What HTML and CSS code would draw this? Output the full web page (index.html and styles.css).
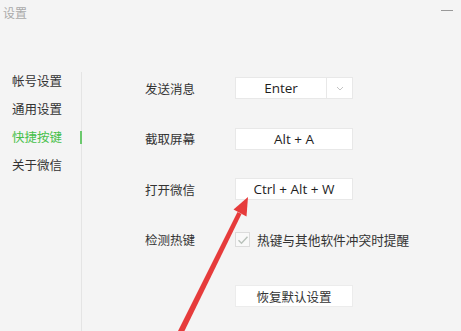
FILE: index.html
```html
<!DOCTYPE html>
<html>
<head>
    <title>设置</title>
    <link rel="stylesheet" href="styles.css">
</head>
<body>
    <div class="titlebar">
        <span class="title">设置</span>
        <span class="min"></span>
    </div>

    <div class="main">
        <ul class="nav">
            <li>帐号设置</li>
            <li>通用设置</li>
            <li class="active">快捷按键</li>
            <li>关于微信</li>
        </ul>
        <div class="divider"></div>

        <div class="content">
            <div class="row">
                <span class="label">发送消息</span>
                <div class="key select">
                    <span class="value">Enter</span>
                    <span class="drop">
                        <svg width="8" height="5" viewBox="0 0 8 5"><path d="M1 1l3 3 3-3" fill="none" stroke="#c4c4c4" stroke-width="1"/></svg>
                    </span>
                </div>
            </div>
            <div class="row">
                <span class="label">截取屏幕</span>
                <div class="key">Alt + A</div>
            </div>
            <div class="row">
                <span class="label">打开微信</span>
                <div class="key">Ctrl + Alt + W</div>
            </div>
            <div class="row">
                <span class="label">检测热键</span>
                <span class="check">
                    <svg width="12" height="10" viewBox="0 0 12 10"><path d="M1.5 5.2l3 3 6-6.5" fill="none" stroke="#b9c2bb" stroke-width="1.4"/></svg>
                </span>
                <span class="check-text">热键与其他软件冲突时提醒</span>
            </div>
            <div class="row last">
                <span class="label"></span>
                <button class="reset">恢复默认设置</button>
            </div>
        </div>
    </div>

    <svg class="arrow" width="461" height="331" viewBox="0 0 461 331">
        <polygon points="177,333 183,334 241.5,214 237.5,212" fill="#e63b3b"/>
        <polygon points="248,197 246.5,216.5 233.5,209.5" fill="#e63b3b"/>
    </svg>
</body>
</html>
```

FILE: styles.css
```css
body {
    margin: 0;
    background-color: #f4f4f4;
    font-family: "Noto Sans CJK SC", "Noto Sans", sans-serif;
    color: #333;
    width: 461px;
    height: 331px;
    overflow: hidden;
}

.titlebar {
    height: 26px;
    display: flex;
    justify-content: space-between;
    align-items: flex-start;
}

.title {
    font-size: 12px;
    color: #aaa;
    margin: 5px 0 0 3px;
    line-height: 16px;
}

.min {
    width: 12px;
    height: 1px;
    background-color: #999;
    margin: 10px 8px 0 0;
}

.main {
    display: flex;
    margin-top: 40px;
    height: 265px;
}

.nav {
    list-style: none;
    margin: 0;
    padding: 1px 0 0 12px;
    width: 69px;
}

.nav li {
    font-size: 12.5px;
    line-height: 28px;
    height: 28px;
    position: relative;
    white-space: nowrap;
}

.nav li.active {
    color: #46c04a;
}

.nav li.active::after {
    content: "";
    position: absolute;
    right: -1px;
    top: 8px;
    width: 2px;
    height: 13px;
    background-color: #6bc96d;
}

.divider {
    width: 1px;
    background-color: #e4e4e4;
    margin-top: 6px;
}

.content {
    padding: 11px 0 0 63px;
    display: flex;
    flex-direction: column;
    gap: 28.5px;
}

.row {
    display: flex;
    align-items: center;
    height: 22px;
}

.row.last {
    margin-top: 6px;
}

.label {
    width: 90px;
    font-size: 12.5px;
    color: #333;
}

.key {
    width: 116px;
    height: 20px;
    background-color: #fff;
    border: 1px solid #e8e8e8;
    display: flex;
    align-items: center;
    justify-content: center;
    font-family: "Open Sans", sans-serif;
    font-size: 13.5px;
    color: #1e1e1e;
}

.key.select {
    justify-content: flex-start;
}

.value {
    flex: 1;
    text-align: center;
}

.drop {
    width: 25px;
    height: 100%;
    border-left: 1px solid #e8e8e8;
    display: flex;
    align-items: center;
    justify-content: center;
}

.check {
    width: 13px;
    height: 13px;
    border: 1px solid #dcdcdc;
    background-color: #f9f9f9;
    display: flex;
    align-items: center;
    justify-content: center;
    margin-right: 7px;
}

.check-text {
    font-size: 12.7px;
    color: #333;
}

.reset {
    width: 118px;
    height: 22px;
    background-color: #fff;
    border: 1px solid #ececec;
    font-family: "Noto Sans CJK SC", sans-serif;
    font-size: 12.5px;
    color: #333;
    padding: 0;
}

.arrow {
    position: absolute;
    left: 0;
    top: 0;
    pointer-events: none;
}
```
